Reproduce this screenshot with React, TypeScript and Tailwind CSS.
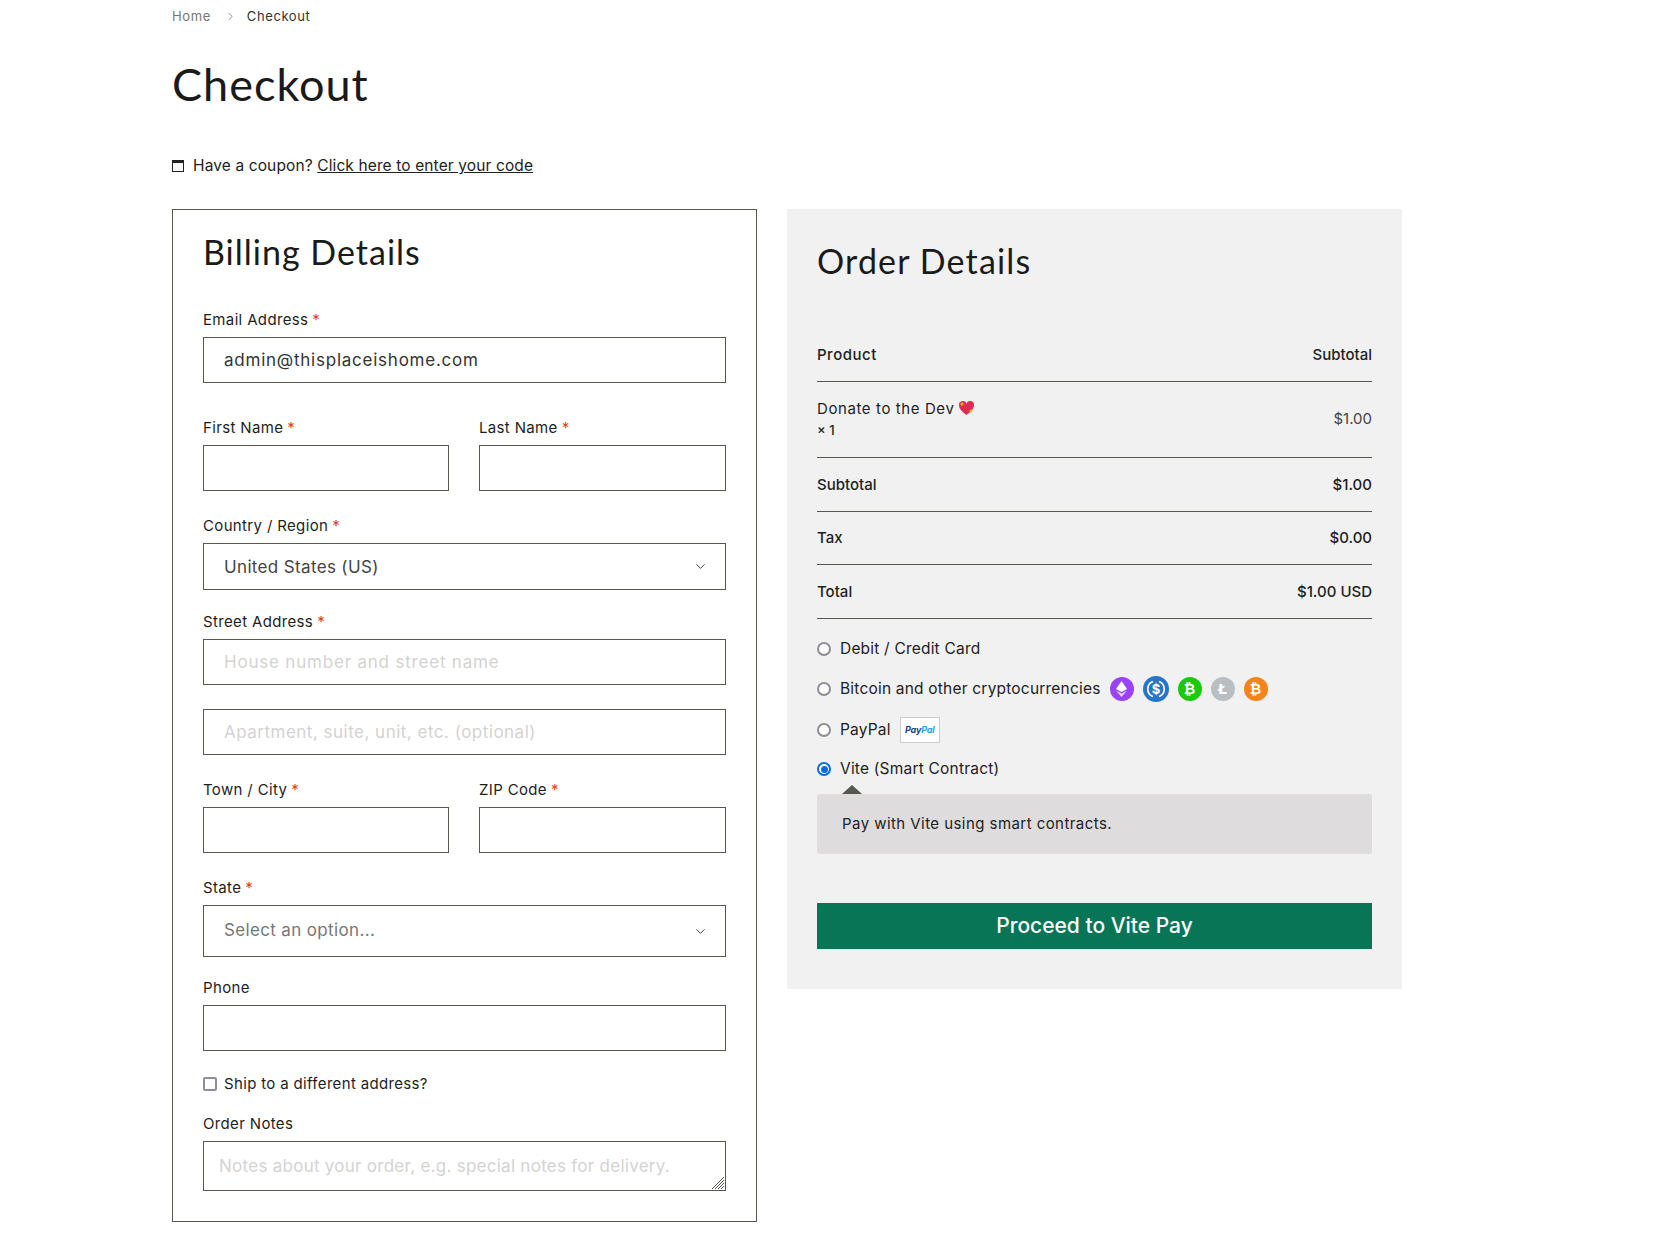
import React from "react";
import { ChevronDown, ChevronRight } from "lucide-react";

const body = "font-['Inter','Noto_Sans',sans-serif]";
const heading = "font-['Lato','Open_Sans',sans-serif]";

function Label({ text, required = true }: { text: string; required?: boolean }) {
  return (
    <div className="h-[18px] text-[15px] leading-[18px] tracking-[0.35px] text-[#1e1e1e]">
      {text}
      {required && <span className="ml-1 text-[#e2401c]">*</span>}
    </div>
  );
}

function Field({ placeholder, value, track = "" }: { placeholder?: string; value?: string; track?: string }) {
  return (
    <div
      className={`flex h-[46px] items-center border border-[#55584f] px-[20px] pt-[2px] text-[17px] ${track} ${
        value ? "text-[#333]" : "text-[#d5d2d2]"
      }`}
    >
      {value ?? placeholder}
    </div>
  );
}

function Select({ text, muted, height }: { text: string; muted?: boolean; height: string }) {
  return (
    <div
      className={`flex ${height} items-center justify-between border border-[#55584f] pl-[20px] pr-[17px] text-[17px] tracking-[0.35px] ${
        muted ? "text-[#777]" : "text-[#444]"
      }`}
    >
      <span className={muted ? "" : "pt-[2px]"}>{text}</span>
      <ChevronDown size={15} strokeWidth={1.5} className="text-[#333]" />
    </div>
  );
}

function Radio({ checked }: { checked?: boolean }) {
  return (
    <span
      className={`flex h-[14px] w-[14px] shrink-0 items-center justify-center rounded-full border-2 bg-white ${
        checked ? "border-[#0a6be0]" : "border-[#8f8d9b]"
      }`}
    >
      {checked && <span className="h-[7px] w-[7px] rounded-full bg-[#0a6be0]" />}
    </span>
  );
}

function Row({ left, right, cls, bold }: { left: string; right: string; cls: string; bold?: boolean }) {
  return (
    <div className={`flex items-center justify-between border-b border-[#55584f] pt-[1px] text-[15px] text-[#1e1e1e] ${cls}`}>
      <span className={bold ? "font-medium" : ""}>{left}</span>
      <span className="font-medium">{right}</span>
    </div>
  );
}

function Coin({ color, children }: { color: string; children: React.ReactNode }) {
  return (
    <span className={`flex h-6 w-6 shrink-0 items-center justify-center rounded-full font-['DejaVu_Sans',sans-serif] text-[14px] font-bold leading-none text-white ${color}`}>
      {children}
    </span>
  );
}

export default function App() {
  return (
    <div className={`h-[1255px] w-[1665px] bg-white pl-[172px] ${body}`}>
      {/* breadcrumb */}
      <div className="flex h-[33px] items-center text-[13px] tracking-[0.6px]">
        <span className="text-[#777]">Home</span>
        <ChevronRight size={13} strokeWidth={1.5} className="ml-[13px] mr-[10px] text-[#777]" />
        <span className="text-[#333]">Checkout</span>
      </div>

      <h1 className={`mt-[19px] h-[64px] text-[45px] leading-[64px] tracking-[1px] text-[#1a1a1a] ${heading}`}>Checkout</h1>

      {/* coupon */}
      <div className="mt-[39px] flex h-[22px] items-center text-[15.5px] tracking-[0.12px] text-[#222]">
        <span className="mr-[9px] flex h-[12px] w-[12px] border border-t-[3px] border-[#222]" />
        <span>
          Have a coupon? <span className="underline">Click here to enter your code</span>
        </span>
      </div>

      <div className="mt-[32px] flex items-start gap-[30px]">
        {/* billing */}
        <div className="h-[1013px] w-[585px] border border-[#55584f] px-[30px]">
          <h2 className={`mt-[24px] h-[36px] text-[34px] leading-[36px] tracking-[1px] text-[#1a1a1a] ${heading}`}>Billing Details</h2>

          <div className="mt-[41px]">
            <Label text="Email Address" />
            <div className="mt-[8px]">
              <Field value="admin@thisplaceishome.com" track="tracking-[0.76px]" />
            </div>
          </div>

          <div className="mt-[36px] grid grid-cols-[246px_247px] gap-x-[30px]">
            <Label text="First Name" />
            <Label text="Last Name" />
            <div className="mt-[8px]"><Field /></div>
            <div className="mt-[8px]"><Field /></div>
          </div>

          <div className="mt-[26px]">
            <Label text="Country / Region" />
            <div className="mt-[8px]">
              <Select text="United States (US)" height="h-[47px]" />
            </div>
          </div>

          <div className="mt-[23px]">
            <Label text="Street Address" />
            <div className="mt-[8px]">
              <Field placeholder="House number and street name" track="tracking-[0.8px]" />
            </div>
            <div className="mt-[24px]">
              <Field placeholder="Apartment, suite, unit, etc. (optional)" track="tracking-[0.49px]" />
            </div>
          </div>

          <div className="mt-[26px] grid grid-cols-[246px_247px] gap-x-[30px]">
            <Label text="Town / City" />
            <Label text="ZIP Code" />
            <div className="mt-[8px]"><Field /></div>
            <div className="mt-[8px]"><Field /></div>
          </div>

          <div className="mt-[26px]">
            <Label text="State" />
            <div className="mt-[8px]">
              <Select text="Select an option..." muted height="h-[52px]" />
            </div>
          </div>

          <div className="mt-[22px]">
            <Label text="Phone" required={false} />
            <div className="mt-[8px]">
              <Field />
            </div>
          </div>

          <div className="mt-[24px] flex h-[18px] items-center text-[15px] tracking-[0.34px] text-[#1e1e1e]">
            <span className="mr-[7px] h-[14px] w-[14px] rounded-[2px] border-2 border-[#8f8d9b]" />
            Ship to a different address?
          </div>

          <div className="mt-[22px]">
            <Label text="Order Notes" required={false} />
            <div className="relative mt-[8px] flex h-[50px] items-center border border-[#55584f] px-[15px] pt-[2px] text-[17px] tracking-[0.27px] text-[#d5d2d2]">
              Notes about your order, e.g. special notes for delivery.
              <svg className="absolute bottom-0 right-0" width="14" height="14" viewBox="0 0 14 14" stroke="#555" strokeWidth="1">
                <path d="M1 13 13 1M4 13 13 4M7 13 13 7M10 13 13 10" />
              </svg>
            </div>
          </div>
        </div>

        {/* order */}
        <div className="h-[780px] w-[615px] bg-[#f1f1f1] px-[30px]">
          <h2 className={`mt-[32px] h-[40px] text-[34px] leading-[40px] tracking-[1.15px] text-[#1a1a1a] ${heading}`}>Order Details</h2>

          <div className="mt-[31px] flex h-[70px] items-start justify-between border-b border-[#55584f] pt-[32px] text-[15px] font-medium leading-[22px] text-[#1e1e1e]">
            <span className="tracking-[0.5px]">Product</span>
            <span>Subtotal</span>
          </div>
          <div className="flex h-[76px] items-center justify-between border-b border-[#55584f] text-[15px] text-[#1e1e1e]">
            <div className="-mt-[2px]">
              <div className="flex items-center leading-[22px] tracking-[0.6px]">
                Donate to the Dev
                <svg className="ml-[4px] -mt-[2px]" width="17" height="16" viewBox="0 0 17 16">
                  <path d="M8.5 15C3 11 1 8 1 5a3.8 3.8 0 0 1 7.5-1A3.8 3.8 0 0 1 16 5c0 3-2 6-7.500 10z" fill="#dc2c50" />
                  <path d="M4 1.500 4.700 3.300 6.500 4 4.700 4.700 4 6.500 3.300 4.700 1.500 4 3.300 3.300zM13 8.500 13.700 10.300 15.500 11 13.700 11.700 13 13.500 12.300 11.700 10.500 11 12.300 10.300z" fill="#f7b731" />
                </svg>
              </div>
              <div className="text-[13px] font-medium leading-[20px]">× 1</div>
            </div>
            <span className="text-[#444]">$1.00</span>
          </div>
          <Row left="Subtotal" right="$1.00" cls="h-[54px]" bold />
          <Row left="Tax" right="$0.00" cls="h-[53px]" bold />
          <Row left="Total" right="$1.00 USD" cls="h-[54px]" bold />

          <div className="mt-[19px] flex h-[22px] items-center gap-[9px] text-[15.5px] tracking-[0.2px] text-[#222]">
            <Radio /> Debit / Credit Card
          </div>
          <div className="mt-[17px] flex h-[24px] items-center gap-[9px] text-[15.5px] tracking-[0.2px] text-[#222]">
            <Radio /> Bitcoin and other cryptocurrencies
            <div className="flex items-center gap-[9px]">
              <Coin color="bg-[#9a42f5]">
                <svg width="11" height="16" viewBox="0 0 11 16" fill="white">
                  <path d="M5.500 0 11 8 5.500 11 0 8z" />
                  <path d="M0 9.500 5.500 12.500 11 9.500 5.500 16z" opacity="0.75" />
                </svg>
              </Coin>
              <span className="flex h-[26px] w-[26px] shrink-0 items-center justify-center rounded-full bg-[#2775ca]">
                <svg width="26" height="26" viewBox="0 0 26 26" fill="none" stroke="white" strokeWidth="1.7">
                  <path d="M10 5.500a8 8 0 0 0 0 15M16 5.500a8 8 0 0 1 0 15" />
                  <text x="13" y="17.500" textAnchor="middle" fontSize="13" fontWeight="700" fill="white" stroke="none">$</text>
                </svg>
              </span>
              <Coin color="bg-[#1bc90f]">₿</Coin>
              <Coin color="bg-[#b8bec2]">Ł</Coin>
              <Coin color="bg-[#f7841a]">₿</Coin>
            </div>
          </div>
          <div className="mt-[16px] flex h-[26px] items-center gap-[9px] text-[15.5px] tracking-[0.2px] text-[#222]">
            <Radio /> PayPal
            <span className="flex h-[26px] w-[40px] items-center justify-center border border-[#ccc] bg-white text-[9px] font-bold italic tracking-[-0.2px]">
              <span className="text-[#1b3d8f]">Pay</span>
              <span className="text-[#2a9fdc]">Pal</span>
            </span>
          </div>
          <div className="mt-[15px] flex h-[22px] items-center gap-[9px] text-[15.5px] tracking-[0.2px] text-[#222]">
            <Radio checked /> Vite (Smart Contract)
          </div>

          <div className="ml-[25px] mt-[5px] h-0 w-0 border-x-[10px] border-b-[9px] border-x-transparent border-b-[#55584f]" />
          <div className="flex h-[60px] items-center rounded-[3px] bg-[#dedcdc] px-[25px] text-[15px] tracking-[0.44px] text-[#222]">
            Pay with Vite using smart contracts.
          </div>

          <div className="mt-[49px] flex h-[46px] items-center justify-center bg-[#077556] text-[21px] font-medium text-white">
            Proceed to Vite Pay
          </div>
        </div>
      </div>
    </div>
  );
}
